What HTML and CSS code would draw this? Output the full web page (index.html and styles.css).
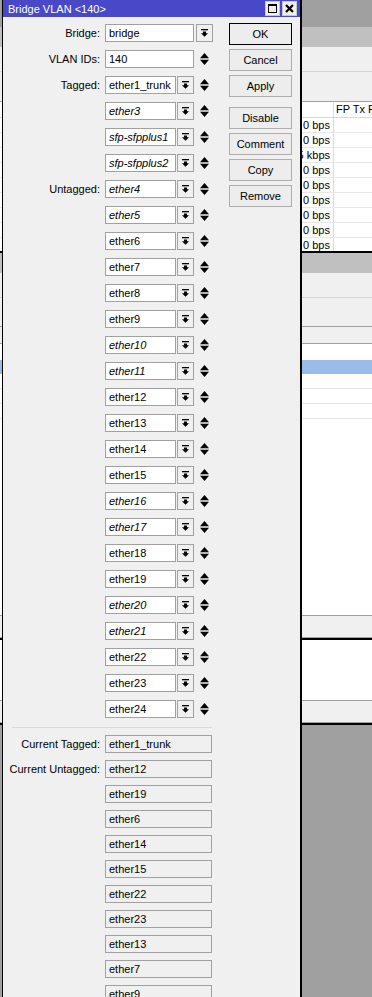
FILE: index.html
```html
<!doctype html>
<html>
	<head>
		<meta charset="utf-8">
		<title>Bridge VLAN &lt;140&gt;</title>
<link rel="stylesheet" href="styles.css">
	</head>
	<body>
		<div class="desk">
			<div class="band dark"></div>
			<div class="band mid"></div>
			<div class="band light"></div>
			<div class="band tool"></div>
			<div class="tbl">
				<div class="tr head"><span class="tc1"></span><span class="tc2">FP Tx P</span></div>
				<div class="tr"><span class="tc1">0 bps</span><span class="tc2"></span></div>
				<div class="tr"><span class="tc1">0 bps</span><span class="tc2"></span></div>
				<div class="tr"><span class="tc1">15 kbps</span><span class="tc2"></span></div>
				<div class="tr"><span class="tc1">0 bps</span><span class="tc2"></span></div>
				<div class="tr"><span class="tc1">0 bps</span><span class="tc2"></span></div>
				<div class="tr"><span class="tc1">0 bps</span><span class="tc2"></span></div>
				<div class="tr"><span class="tc1">0 bps</span><span class="tc2"></span></div>
				<div class="tr"><span class="tc1">0 bps</span><span class="tc2"></span></div>
				<div class="tr"><span class="tc1">0 bps</span><span class="tc2"></span></div>
			</div>
			<div class="band black"></div>
			<div class="band mid"></div>
			<div class="band light"></div>
			<div class="band tool2"></div>
			<div class="band tool3"></div>
			<div class="band white16"></div>
			<div class="band selected"></div>
			<div class="band wrow"></div>
			<div class="band wrow"></div>
			<div class="band wrow"></div>
			<div class="band wfill"></div>
			<div class="band status"></div>
			<div class="band black"></div>
			<div class="band wpane"></div>
			<div class="band status"></div>
			<div class="band black"></div>
		</div>

		<div class="dialog">
			<div class="titlebar">
				<span class="title">Bridge VLAN &lt;140&gt;</span>
				<span class="tbtn"><span class="maxbox"></span></span>
				<span class="tbtn">
					<svg width="9" height="9" viewBox="0 0 9 9"><path d="M1 1 L8 8 M8 1 L1 8" stroke="#000" stroke-width="2.2"/></svg>
				</span>
			</div>
			<div class="content">
				<div class="form">
					<div class="fields">
						<div class="row">
							<span class="label">Bridge:</span>
							<span class="input wide">bridge</span>
							<span class="drop bridge-drop"><svg width="7" height="8" viewBox="0 0 7 8"><rect x="0" y="0" width="7" height="1.3"/><path d="M2 2.5 H5 V4.2 H7 L3.5 7.8 L0 4.2 H2 Z"/></svg></span>
						</div>
						<div class="row">
							<span class="label">VLAN IDs:</span>
							<span class="input wide">140</span>
							<span class="spin"><svg width="9" height="12" viewBox="0 0 9 12"><path d="M0 5.3 L4.5 0 L9 5.3 Z M0 6.7 H9 L4.5 12 Z"/></svg></span>
						</div>
						<div class="row">
							<span class="label">Tagged:</span>
							<span class="input short">ether1_trunk</span>
							<span class="drop"><svg width="7" height="8" viewBox="0 0 7 8"><rect x="0" y="0" width="7" height="1.3"/><path d="M2 2.5 H5 V4.2 H7 L3.5 7.8 L0 4.2 H2 Z"/></svg></span>
							<span class="spin"><svg width="9" height="12" viewBox="0 0 9 12"><path d="M0 5.3 L4.5 0 L9 5.3 Z M0 6.7 H9 L4.5 12 Z"/></svg></span>
						</div>
						<div class="row">
							<span class="label"></span>
							<span class="input short italic">ether3</span>
							<span class="drop"><svg width="7" height="8" viewBox="0 0 7 8"><rect x="0" y="0" width="7" height="1.3"/><path d="M2 2.5 H5 V4.2 H7 L3.5 7.8 L0 4.2 H2 Z"/></svg></span>
							<span class="spin"><svg width="9" height="12" viewBox="0 0 9 12"><path d="M0 5.3 L4.5 0 L9 5.3 Z M0 6.7 H9 L4.5 12 Z"/></svg></span>
						</div>
						<div class="row">
							<span class="label"></span>
							<span class="input short italic">sfp-sfpplus1</span>
							<span class="drop"><svg width="7" height="8" viewBox="0 0 7 8"><rect x="0" y="0" width="7" height="1.3"/><path d="M2 2.5 H5 V4.2 H7 L3.5 7.8 L0 4.2 H2 Z"/></svg></span>
							<span class="spin"><svg width="9" height="12" viewBox="0 0 9 12"><path d="M0 5.3 L4.5 0 L9 5.3 Z M0 6.7 H9 L4.5 12 Z"/></svg></span>
						</div>
						<div class="row">
							<span class="label"></span>
							<span class="input short italic">sfp-sfpplus2</span>
							<span class="drop"><svg width="7" height="8" viewBox="0 0 7 8"><rect x="0" y="0" width="7" height="1.3"/><path d="M2 2.5 H5 V4.2 H7 L3.5 7.8 L0 4.2 H2 Z"/></svg></span>
							<span class="spin"><svg width="9" height="12" viewBox="0 0 9 12"><path d="M0 5.3 L4.5 0 L9 5.3 Z M0 6.7 H9 L4.5 12 Z"/></svg></span>
						</div>
						<div class="row">
							<span class="label">Untagged:</span>
							<span class="input short italic">ether4</span>
							<span class="drop"><svg width="7" height="8" viewBox="0 0 7 8"><rect x="0" y="0" width="7" height="1.3"/><path d="M2 2.5 H5 V4.2 H7 L3.5 7.8 L0 4.2 H2 Z"/></svg></span>
							<span class="spin"><svg width="9" height="12" viewBox="0 0 9 12"><path d="M0 5.3 L4.5 0 L9 5.3 Z M0 6.7 H9 L4.5 12 Z"/></svg></span>
						</div>
						<div class="row">
							<span class="label"></span>
							<span class="input short italic">ether5</span>
							<span class="drop"><svg width="7" height="8" viewBox="0 0 7 8"><rect x="0" y="0" width="7" height="1.3"/><path d="M2 2.5 H5 V4.2 H7 L3.5 7.8 L0 4.2 H2 Z"/></svg></span>
							<span class="spin"><svg width="9" height="12" viewBox="0 0 9 12"><path d="M0 5.3 L4.5 0 L9 5.3 Z M0 6.7 H9 L4.5 12 Z"/></svg></span>
						</div>
						<div class="row">
							<span class="label"></span>
							<span class="input short">ether6</span>
							<span class="drop"><svg width="7" height="8" viewBox="0 0 7 8"><rect x="0" y="0" width="7" height="1.3"/><path d="M2 2.5 H5 V4.2 H7 L3.5 7.8 L0 4.2 H2 Z"/></svg></span>
							<span class="spin"><svg width="9" height="12" viewBox="0 0 9 12"><path d="M0 5.3 L4.5 0 L9 5.3 Z M0 6.7 H9 L4.5 12 Z"/></svg></span>
						</div>
						<div class="row">
							<span class="label"></span>
							<span class="input short">ether7</span>
							<span class="drop"><svg width="7" height="8" viewBox="0 0 7 8"><rect x="0" y="0" width="7" height="1.3"/><path d="M2 2.5 H5 V4.2 H7 L3.5 7.8 L0 4.2 H2 Z"/></svg></span>
							<span class="spin"><svg width="9" height="12" viewBox="0 0 9 12"><path d="M0 5.3 L4.5 0 L9 5.3 Z M0 6.7 H9 L4.5 12 Z"/></svg></span>
						</div>
						<div class="row">
							<span class="label"></span>
							<span class="input short">ether8</span>
							<span class="drop"><svg width="7" height="8" viewBox="0 0 7 8"><rect x="0" y="0" width="7" height="1.3"/><path d="M2 2.5 H5 V4.2 H7 L3.5 7.8 L0 4.2 H2 Z"/></svg></span>
							<span class="spin"><svg width="9" height="12" viewBox="0 0 9 12"><path d="M0 5.3 L4.5 0 L9 5.3 Z M0 6.7 H9 L4.5 12 Z"/></svg></span>
						</div>
						<div class="row">
							<span class="label"></span>
							<span class="input short">ether9</span>
							<span class="drop"><svg width="7" height="8" viewBox="0 0 7 8"><rect x="0" y="0" width="7" height="1.3"/><path d="M2 2.5 H5 V4.2 H7 L3.5 7.8 L0 4.2 H2 Z"/></svg></span>
							<span class="spin"><svg width="9" height="12" viewBox="0 0 9 12"><path d="M0 5.3 L4.5 0 L9 5.3 Z M0 6.7 H9 L4.5 12 Z"/></svg></span>
						</div>
						<div class="row">
							<span class="label"></span>
							<span class="input short italic">ether10</span>
							<span class="drop"><svg width="7" height="8" viewBox="0 0 7 8"><rect x="0" y="0" width="7" height="1.3"/><path d="M2 2.5 H5 V4.2 H7 L3.5 7.8 L0 4.2 H2 Z"/></svg></span>
							<span class="spin"><svg width="9" height="12" viewBox="0 0 9 12"><path d="M0 5.3 L4.5 0 L9 5.3 Z M0 6.7 H9 L4.5 12 Z"/></svg></span>
						</div>
						<div class="row">
							<span class="label"></span>
							<span class="input short italic">ether11</span>
							<span class="drop"><svg width="7" height="8" viewBox="0 0 7 8"><rect x="0" y="0" width="7" height="1.3"/><path d="M2 2.5 H5 V4.2 H7 L3.5 7.8 L0 4.2 H2 Z"/></svg></span>
							<span class="spin"><svg width="9" height="12" viewBox="0 0 9 12"><path d="M0 5.3 L4.5 0 L9 5.3 Z M0 6.7 H9 L4.5 12 Z"/></svg></span>
						</div>
						<div class="row">
							<span class="label"></span>
							<span class="input short">ether12</span>
							<span class="drop"><svg width="7" height="8" viewBox="0 0 7 8"><rect x="0" y="0" width="7" height="1.3"/><path d="M2 2.5 H5 V4.2 H7 L3.5 7.8 L0 4.2 H2 Z"/></svg></span>
							<span class="spin"><svg width="9" height="12" viewBox="0 0 9 12"><path d="M0 5.3 L4.5 0 L9 5.3 Z M0 6.7 H9 L4.5 12 Z"/></svg></span>
						</div>
						<div class="row">
							<span class="label"></span>
							<span class="input short">ether13</span>
							<span class="drop"><svg width="7" height="8" viewBox="0 0 7 8"><rect x="0" y="0" width="7" height="1.3"/><path d="M2 2.5 H5 V4.2 H7 L3.5 7.8 L0 4.2 H2 Z"/></svg></span>
							<span class="spin"><svg width="9" height="12" viewBox="0 0 9 12"><path d="M0 5.3 L4.5 0 L9 5.3 Z M0 6.7 H9 L4.5 12 Z"/></svg></span>
						</div>
						<div class="row">
							<span class="label"></span>
							<span class="input short">ether14</span>
							<span class="drop"><svg width="7" height="8" viewBox="0 0 7 8"><rect x="0" y="0" width="7" height="1.3"/><path d="M2 2.5 H5 V4.2 H7 L3.5 7.8 L0 4.2 H2 Z"/></svg></span>
							<span class="spin"><svg width="9" height="12" viewBox="0 0 9 12"><path d="M0 5.3 L4.5 0 L9 5.3 Z M0 6.7 H9 L4.5 12 Z"/></svg></span>
						</div>
						<div class="row">
							<span class="label"></span>
							<span class="input short">ether15</span>
							<span class="drop"><svg width="7" height="8" viewBox="0 0 7 8"><rect x="0" y="0" width="7" height="1.3"/><path d="M2 2.5 H5 V4.2 H7 L3.5 7.8 L0 4.2 H2 Z"/></svg></span>
							<span class="spin"><svg width="9" height="12" viewBox="0 0 9 12"><path d="M0 5.3 L4.5 0 L9 5.3 Z M0 6.7 H9 L4.5 12 Z"/></svg></span>
						</div>
						<div class="row">
							<span class="label"></span>
							<span class="input short italic">ether16</span>
							<span class="drop"><svg width="7" height="8" viewBox="0 0 7 8"><rect x="0" y="0" width="7" height="1.3"/><path d="M2 2.5 H5 V4.2 H7 L3.5 7.8 L0 4.2 H2 Z"/></svg></span>
							<span class="spin"><svg width="9" height="12" viewBox="0 0 9 12"><path d="M0 5.3 L4.5 0 L9 5.3 Z M0 6.7 H9 L4.5 12 Z"/></svg></span>
						</div>
						<div class="row">
							<span class="label"></span>
							<span class="input short italic">ether17</span>
							<span class="drop"><svg width="7" height="8" viewBox="0 0 7 8"><rect x="0" y="0" width="7" height="1.3"/><path d="M2 2.5 H5 V4.2 H7 L3.5 7.8 L0 4.2 H2 Z"/></svg></span>
							<span class="spin"><svg width="9" height="12" viewBox="0 0 9 12"><path d="M0 5.3 L4.5 0 L9 5.3 Z M0 6.7 H9 L4.5 12 Z"/></svg></span>
						</div>
						<div class="row">
							<span class="label"></span>
							<span class="input short">ether18</span>
							<span class="drop"><svg width="7" height="8" viewBox="0 0 7 8"><rect x="0" y="0" width="7" height="1.3"/><path d="M2 2.5 H5 V4.2 H7 L3.5 7.8 L0 4.2 H2 Z"/></svg></span>
							<span class="spin"><svg width="9" height="12" viewBox="0 0 9 12"><path d="M0 5.3 L4.5 0 L9 5.3 Z M0 6.7 H9 L4.5 12 Z"/></svg></span>
						</div>
						<div class="row">
							<span class="label"></span>
							<span class="input short">ether19</span>
							<span class="drop"><svg width="7" height="8" viewBox="0 0 7 8"><rect x="0" y="0" width="7" height="1.3"/><path d="M2 2.5 H5 V4.2 H7 L3.5 7.8 L0 4.2 H2 Z"/></svg></span>
							<span class="spin"><svg width="9" height="12" viewBox="0 0 9 12"><path d="M0 5.3 L4.5 0 L9 5.3 Z M0 6.7 H9 L4.5 12 Z"/></svg></span>
						</div>
						<div class="row">
							<span class="label"></span>
							<span class="input short italic">ether20</span>
							<span class="drop"><svg width="7" height="8" viewBox="0 0 7 8"><rect x="0" y="0" width="7" height="1.3"/><path d="M2 2.5 H5 V4.2 H7 L3.5 7.8 L0 4.2 H2 Z"/></svg></span>
							<span class="spin"><svg width="9" height="12" viewBox="0 0 9 12"><path d="M0 5.3 L4.5 0 L9 5.3 Z M0 6.7 H9 L4.5 12 Z"/></svg></span>
						</div>
						<div class="row">
							<span class="label"></span>
							<span class="input short italic">ether21</span>
							<span class="drop"><svg width="7" height="8" viewBox="0 0 7 8"><rect x="0" y="0" width="7" height="1.3"/><path d="M2 2.5 H5 V4.2 H7 L3.5 7.8 L0 4.2 H2 Z"/></svg></span>
							<span class="spin"><svg width="9" height="12" viewBox="0 0 9 12"><path d="M0 5.3 L4.5 0 L9 5.3 Z M0 6.7 H9 L4.5 12 Z"/></svg></span>
						</div>
						<div class="row">
							<span class="label"></span>
							<span class="input short">ether22</span>
							<span class="drop"><svg width="7" height="8" viewBox="0 0 7 8"><rect x="0" y="0" width="7" height="1.3"/><path d="M2 2.5 H5 V4.2 H7 L3.5 7.8 L0 4.2 H2 Z"/></svg></span>
							<span class="spin"><svg width="9" height="12" viewBox="0 0 9 12"><path d="M0 5.3 L4.5 0 L9 5.3 Z M0 6.7 H9 L4.5 12 Z"/></svg></span>
						</div>
						<div class="row">
							<span class="label"></span>
							<span class="input short">ether23</span>
							<span class="drop"><svg width="7" height="8" viewBox="0 0 7 8"><rect x="0" y="0" width="7" height="1.3"/><path d="M2 2.5 H5 V4.2 H7 L3.5 7.8 L0 4.2 H2 Z"/></svg></span>
							<span class="spin"><svg width="9" height="12" viewBox="0 0 9 12"><path d="M0 5.3 L4.5 0 L9 5.3 Z M0 6.7 H9 L4.5 12 Z"/></svg></span>
						</div>
						<div class="row">
							<span class="label"></span>
							<span class="input short">ether24</span>
							<span class="drop"><svg width="7" height="8" viewBox="0 0 7 8"><rect x="0" y="0" width="7" height="1.3"/><path d="M2 2.5 H5 V4.2 H7 L3.5 7.8 L0 4.2 H2 Z"/></svg></span>
							<span class="spin"><svg width="9" height="12" viewBox="0 0 9 12"><path d="M0 5.3 L4.5 0 L9 5.3 Z M0 6.7 H9 L4.5 12 Z"/></svg></span>
						</div>
					</div>

					<div class="sep"></div>

					<div class="current">
						<div class="row"><span class="label">Current Tagged:</span><span class="input ro">ether1_trunk</span></div>
						<div class="row"><span class="label">Current Untagged:</span><span class="input ro">ether12</span></div>
						<div class="row"><span class="label"></span><span class="input ro">ether19</span></div>
						<div class="row"><span class="label"></span><span class="input ro">ether6</span></div>
						<div class="row"><span class="label"></span><span class="input ro">ether14</span></div>
						<div class="row"><span class="label"></span><span class="input ro">ether15</span></div>
						<div class="row"><span class="label"></span><span class="input ro">ether22</span></div>
						<div class="row"><span class="label"></span><span class="input ro">ether23</span></div>
						<div class="row"><span class="label"></span><span class="input ro">ether13</span></div>
						<div class="row"><span class="label"></span><span class="input ro">ether7</span></div>
						<div class="row"><span class="label"></span><span class="input ro">ether9</span></div>
					</div>
				</div>

				<div class="buttons">
					<button type="button" class="btn default">OK</button>
					<button type="button" class="btn">Cancel</button>
					<button type="button" class="btn">Apply</button>
					<button type="button" class="btn group">Disable</button>
					<button type="button" class="btn">Comment</button>
					<button type="button" class="btn">Copy</button>
					<button type="button" class="btn">Remove</button>
				</div>
			</div>
		</div>
	</body>
</html>
```
FILE: styles.css
```css
body {
	margin: 0;
	width: 372px;
	height: 997px;
	overflow: hidden;
	position: relative;
	background-color: #a0a0a0;
	font: 11px "Liberation Sans", Arial, sans-serif;
	color: #000;
}

/* window behind the dialog */
.desk {
	display: flex;
	flex-direction: column;
}
.band {
	flex: none;
	box-sizing: border-box;
}
.dark {
	height: 27px;
	background-color: #a0a0a0;
}
.mid {
	height: 20px;
	background-color: #c0c0c0;
}
.light {
	height: 25px;
	background-color: #f0f0f0;
	border-bottom: 1px solid #d4d4d4;
}
.tool {
	height: 30px;
	background-color: #f0f0f0;
	border-bottom: 1px solid #a0a0a0;
}
.tbl {
	height: 149px;
	overflow: hidden;
	background-color: #fff;
	flex: none;
}
.tr {
	display: flex;
	height: 15px;
	line-height: 14px;
	box-sizing: border-box;
	border-bottom: 1px solid #e8e8e8;
}
.tr.head {
	height: 16px;
	line-height: 15px;
	border-bottom: 1px solid #d8d8d8;
}
.tc1 {
	width: 334px;
	flex: none;
	box-sizing: border-box;
	text-align: right;
	padding-right: 3px;
	border-right: 1px solid #dcdcdc;
	white-space: nowrap;
}
.tc2 {
	padding-left: 2px;
	white-space: nowrap;
}
.black {
	height: 2px;
	background-color: #000;
}
.tool2 {
	height: 29px;
	background-color: #f0f0f0;
	border-bottom: 1px solid #a0a0a0;
}
.tool3 {
	height: 17px;
	background-color: #f0f0f0;
	border-bottom: 1px solid #a0a0a0;
}
.white16 {
	height: 16px;
	background-color: #fff;
}
.selected {
	height: 14px;
	background-color: #99bde8;
}
.wrow {
	height: 15px;
	background-color: #fff;
	border-bottom: 1px solid #e4e4e4;
}
.wfill {
	height: 197px;
	background-color: #fff;
	border-bottom: 1px solid #a0a0a0;
}
.status {
	height: 22px;
	background-color: #f0f0f0;
	border-bottom: 1px solid #a0a0a0;
}
.wpane {
	height: 61px;
	background-color: #fff;
	border-bottom: 1px solid #a0a0a0;
}

/* the dialog window */
.dialog {
	position: absolute;
	top: 0;
	left: 2px;
	width: 297px;
	height: 997px;
	background-color: #f0f0f0;
	border-left: 1px solid #000;
	border-right: 2px solid #000;
}
.titlebar {
	height: 17px;
	display: flex;
	align-items: center;
	padding: 0 3px 0 5px;
	background-color: #4848c8;
	color: #fff;
}
.title {
	flex: 1;
	white-space: nowrap;
}
.tbtn {
	width: 15px;
	height: 15px;
	margin-left: 2px;
	display: flex;
	align-items: center;
	justify-content: center;
	background-color: #f0f0f0;
	box-sizing: border-box;
	border: 1px solid #c8c8c8;
}
.maxbox {
	width: 9px;
	height: 9px;
	box-sizing: border-box;
	border: 1px solid #000;
	border-top-width: 2px;
}

.content {
	display: flex;
	padding-top: 6px;
}
.form {
	width: 209px;
	padding-top: 1px;
	flex: none;
}
.fields {
	display: flex;
	flex-direction: column;
	gap: 8px;
}
.row {
	display: flex;
	align-items: center;
	height: 18px;
}
.label {
	width: 97px;
	margin-right: 5px;
	flex: none;
	text-align: right;
	white-space: nowrap;
}
.input {
	height: 18px;
	box-sizing: border-box;
	border: 1px solid #a0a0a0;
	background-color: #fff;
	padding-left: 3px;
	line-height: 16px;
	white-space: nowrap;
	overflow: hidden;
	flex: none;
}
.wide {
	width: 89px;
}
.short {
	width: 71px;
}
.italic {
	font-style: italic;
}
.drop {
	width: 17px;
	height: 18px;
	margin-left: 1px;
	box-sizing: border-box;
	border: 1px solid #a0a0a0;
	background-color: #f0f0f0;
	display: flex;
	align-items: center;
	justify-content: center;
	flex: none;
}
.bridge-drop {
	margin-left: 2px;
}
.spin {
	margin-left: 6px;
	display: flex;
	flex: none;
}
.sep {
	margin: 9px 0 7px 9px;
	width: 200px;
	height: 1px;
	background-color: #dadada;
}
.current {
	display: flex;
	flex-direction: column;
	gap: 7px;
}
.ro {
	width: 107px;
	background-color: #f0f0f0;
}

.buttons {
	margin-left: 17px;
	width: 63px;
	display: flex;
	flex-direction: column;
	gap: 4px;
}
.btn {
	height: 22px;
	margin: 0;
	padding: 0;
	border: 1px solid #adadad;
	background-color: #ededed;
	font: 11px "Liberation Sans", Arial, sans-serif;
	color: #000;
}
.btn.default {
	border-color: #000;
}
.btn.group {
	margin-top: 6px;
}
```
